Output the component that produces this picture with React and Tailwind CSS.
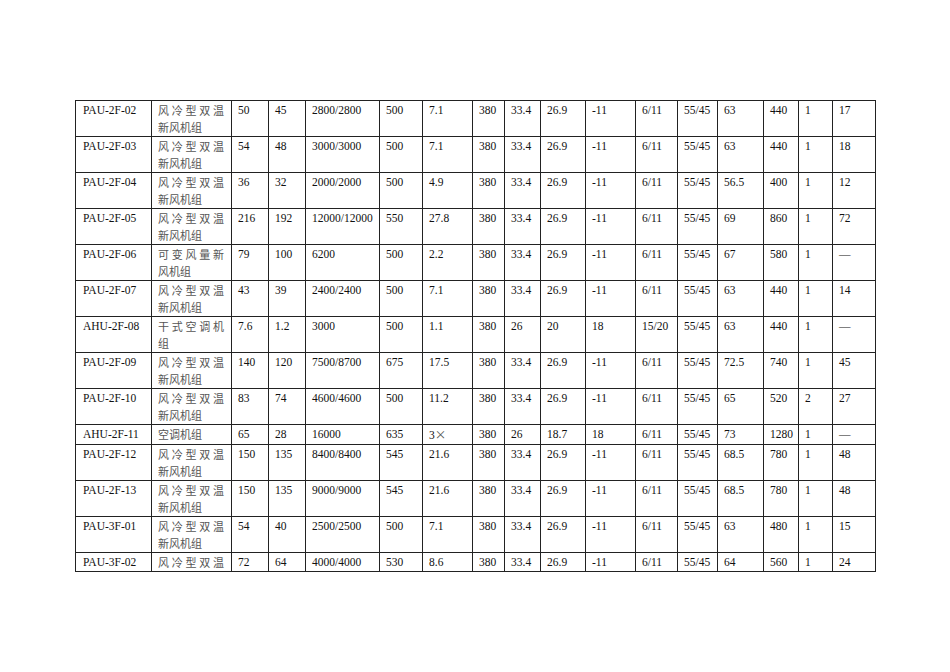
const cols = [76, 80, 37, 37, 74, 43, 50, 32, 36, 45, 50, 42, 40, 46, 35, 34, 43];

const colClass = [
  "w-[76px]", "w-[80px]", "w-[37px]", "w-[37px]", "w-[74px]", "w-[43px]", "w-[50px]", "w-[32px]", "w-[36px]",
  "w-[45px]", "w-[50px]", "w-[42px]", "w-[40px]", "w-[46px]", "w-[35px]", "w-[34px]", "w-[43px]",
];

const DUAL = ["风冷型双温", "新风机组"];

const rows = [
  ["PAU-2F-02", DUAL, "50", "45", "2800/2800", "500", "7.1", "380", "33.4", "26.9", "-11", "6/11", "55/45", "63", "440", "1", "17"],
  ["PAU-2F-03", DUAL, "54", "48", "3000/3000", "500", "7.1", "380", "33.4", "26.9", "-11", "6/11", "55/45", "63", "440", "1", "18"],
  ["PAU-2F-04", DUAL, "36", "32", "2000/2000", "500", "4.9", "380", "33.4", "26.9", "-11", "6/11", "55/45", "56.5", "400", "1", "12"],
  ["PAU-2F-05", DUAL, "216", "192", "12000/12000", "550", "27.8", "380", "33.4", "26.9", "-11", "6/11", "55/45", "69", "860", "1", "72"],
  ["PAU-2F-06", ["可变风量新", "风机组"], "79", "100", "6200", "500", "2.2", "380", "33.4", "26.9", "-11", "6/11", "55/45", "67", "580", "1", "—"],
  ["PAU-2F-07", DUAL, "43", "39", "2400/2400", "500", "7.1", "380", "33.4", "26.9", "-11", "6/11", "55/45", "63", "440", "1", "14"],
  ["AHU-2F-08", ["干式空调机", "组"], "7.6", "1.2", "3000", "500", "1.1", "380", "26", "20", "18", "15/20", "55/45", "63", "440", "1", "—"],
  ["PAU-2F-09", DUAL, "140", "120", "7500/8700", "675", "17.5", "380", "33.4", "26.9", "-11", "6/11", "55/45", "72.5", "740", "1", "45"],
  ["PAU-2F-10", DUAL, "83", "74", "4600/4600", "500", "11.2", "380", "33.4", "26.9", "-11", "6/11", "55/45", "65", "520", "2", "27"],
  ["AHU-2F-11", ["空调机组"], "65", "28", "16000", "635", "3×", "380", "26", "18.7", "18", "6/11", "55/45", "73", "1280", "1", "—"],
  ["PAU-2F-12", DUAL, "150", "135", "8400/8400", "545", "21.6", "380", "33.4", "26.9", "-11", "6/11", "55/45", "68.5", "780", "1", "48"],
  ["PAU-2F-13", DUAL, "150", "135", "9000/9000", "545", "21.6", "380", "33.4", "26.9", "-11", "6/11", "55/45", "68.5", "780", "1", "48"],
  ["PAU-3F-01", DUAL, "54", "40", "2500/2500", "500", "7.1", "380", "33.4", "26.9", "-11", "6/11", "55/45", "63", "480", "1", "15"],
  // last row is cut at the page edge, only the first line of the name shows
  ["PAU-3F-02", ["风冷型双温", ""], "72", "64", "4000/4000", "530", "8.6", "380", "33.4", "26.9", "-11", "6/11", "55/45", "64", "560", "1", "24"],
];

function NameCell({ lines }) {
  return (
    <td className="border border-[#222] pl-1.5 pr-[7px] pt-px align-top [font-family:'Noto_Sans_CJK_SC',sans-serif] text-[11px] text-[#555]">
      {lines
        .filter((line) => line !== "")
        .map((line, i) => (
          <div
            key={i}
            className={i === 0 && lines.length > 1 ? "text-justify [text-align-last:justify]" : ""}
          >
            {line}
          </div>
        ))}
    </td>
  );
}

export default function App() {
  return (
    <div className="min-h-screen bg-white pt-[100px] pl-[75px]">
      <table className="table-fixed border-collapse w-[801px] [font-family:'Liberation_Serif',serif] text-[11.5px] leading-[17px] text-[#111]">
        <colgroup>
          {cols.map((_, i) => (
            <col key={i} className={colClass[i]} />
          ))}
        </colgroup>
        <tbody>
          {rows.map((row) => (
            <tr key={row[0]}>
              {row.map((cell, i) =>
                i === 1 ? (
                  <NameCell key={i} lines={cell} />
                ) : (
                  <td
                    key={i}
                    className={`border border-[#222] pt-px align-top whitespace-nowrap [font-family:'Liberation_Serif',serif] ${i === 0 ? "pl-[7px]" : "pl-1.5"}`}
                  >
                    {cell === "3×" ? (
                      <>
                        3<span className="[font-family:'Noto_Sans_CJK_SC',sans-serif] text-[#555]">×</span>
                      </>
                    ) : (
                      cell
                    )}
                  </td>
                )
              )}
            </tr>
          ))}
        </tbody>
      </table>
    </div>
  );
}
